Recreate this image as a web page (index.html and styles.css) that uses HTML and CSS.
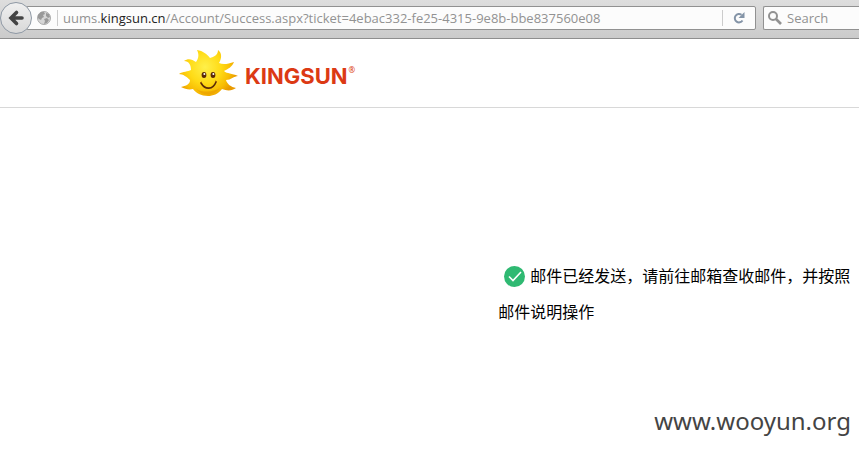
FILE: index.html
```
<!DOCTYPE html>
<html lang="zh-CN">
<head>
  <meta charset="UTF-8" />
  <meta name="viewport" content="width=device-width, initial-scale=1.0"/>
  <title>KINGSUN</title>
  <link rel="stylesheet" href="styles.css">
</head>
<body>
  <div class="toolbar">
    <button type="button" class="back" aria-label="Back">
      <svg width="18" height="18" viewBox="0 0 18 18">
        <path d="M9.5 3.5 L4 9 L9.5 14.5 M5 9 H15" fill="none" stroke="#444" stroke-width="3.6" stroke-linecap="round"/>
      </svg>
    </button>
    <div class="address">
      <svg class="globe" width="14" height="14" viewBox="0 0 14 14">
        <circle cx="7" cy="7" r="6.5" fill="#d6d6d6" stroke="#aaa"/>
        <path d="M1 4 L4 1 L7 1 L8 3 L6 4 L7 6 L5 7 L4 9 L2 8 L1 7 Z M9 2 L12 3 L13 6 L11 7 L9 5 Z M7 8 L10 7 L12 9 L10 12 L7 13 L8 10 Z" fill="#999"/>
      </svg>
      <div class="url" role="textbox" aria-label="Address" contenteditable="true" spellcheck="false">uums.<span class="domain">kingsun.cn</span>/Account/Success.aspx?ticket=4ebac332-fe25-4315-9e8b-bbe837560e08</div>
      <button type="button" class="reload" aria-label="Reload">
        <svg width="12" height="12" viewBox="0 0 12 12">
          <path d="M9.5 8.5 A4.2 4.2 0 1 1 8.5 2.8" fill="none" stroke="#8494a7" stroke-width="2"/>
          <path d="M11.5 0 V6 H5.5 Z" fill="#8494a7"/>
        </svg>
      </button>
    </div>
    <label class="search">
      <svg width="14" height="14" viewBox="0 0 14 14">
        <circle cx="5" cy="5" r="4" fill="none" stroke="#929292" stroke-width="2"/>
        <path d="M8 8 L13 13" stroke="#929292" stroke-width="2.6"/>
      </svg>
      <input type="text" placeholder="Search" aria-label="Search">
    </label>
  </div>

  <header>
    <a class="logo" href="#" aria-label="KINGSUN">
      <svg width="60" height="48" viewBox="0 0 60 48">
        <defs>
          <radialGradient id="sun" gradientUnits="userSpaceOnUse" cx="26" cy="18" r="32">
            <stop offset="0" stop-color="#fff04a"/>
            <stop offset="0.5" stop-color="#ffdb16"/>
            <stop offset="0.8" stop-color="#f8bd04"/>
            <stop offset="1" stop-color="#e99a00"/>
          </radialGradient>
        </defs>
        <path d="M17 13 C20 9 20 5 18 1 C24 2 28 5 31 9 C35 8 39 6 39 1 C43 4 43 9 40 14 C44 16 49 15 55 13 C53 18 49 20 45 22 C48 25 53 24 59 27 C55 27 52 31 47 31 C48 35 52 38 57 39 C53 42 48 42 43 40 C39 45 34 47 29 47 C22 47 17 44 14 40 C10 41 6 40 2 38 C7 37 11 35 11 31 C8 28 4 25 0 25 C4 22 9 23 12 21 C12 16 10 12 5 12 C9 9 13 10 17 13 Z" fill="url(#sun)"/>
        <path d="M17 40 C23 47 34 48 41 39 C35 43 24 44 17 40 Z" fill="#e89b00" opacity="0.6"/>
        <ellipse cx="25" cy="26" rx="2.4" ry="3" fill="#5a2b08"/>
        <ellipse cx="34" cy="26" rx="2.4" ry="3" fill="#5a2b08"/>
        <circle cx="25.4" cy="25" r="1" fill="#fff"/>
        <circle cx="34.4" cy="25" r="1" fill="#fff"/>
        <path d="M22 34 C26 41 34 41 37 33" fill="none" stroke="#5a2b08" stroke-width="1.6" stroke-linecap="round"/>
        <path d="M21 34 L23 33 M36 32 L38 33" stroke="#a05a08" stroke-width="1"/>
      </svg>
      <span class="brand">KINGSUN</span><span class="mark">®</span>
    </a>
  </header>

  <main>
    <p class="message"><svg class="tick" width="21" height="21" viewBox="0 0 21 21">
        <circle cx="10.5" cy="10.5" r="10.5" fill="#2fb972"/>
        <path d="M5 10.5 L9 14.5 L17 6" fill="none" stroke="#fff" stroke-width="1.6"/>
      </svg>邮件已经发送，请前往邮箱查收邮件，并按照邮件说明操作</p>
  </main>

  <footer>www.wooyun.org</footer>
</body>
</html>
```
FILE: styles.css
```
* {
  box-sizing: border-box;
}

body {
  font-family: "Noto Sans", "Noto Sans CJK SC", sans-serif;
  margin: 0;
  min-height: 100vh;
  display: flex;
  flex-direction: column;
  background: #fff;
}

button {
  border: none;
  padding: 0;
  background: none;
  cursor: pointer;
}

.toolbar {
  display: flex;
  align-items: center;
  height: 39px;
  padding-bottom: 3px;
  background: linear-gradient(#dedede, #cbcbcb);
  border-bottom: 1px solid #8e8e8e;
  font-family: "Open Sans", sans-serif;
  font-size: 13px;
  color: #929292;
}

.back {
  display: flex;
  align-items: center;
  justify-content: center;
  width: 32px;
  height: 32px;
  flex: none;
  z-index: 1;
  border: 1px solid #8f99a5;
  border-radius: 50%;
  background: linear-gradient(#f0f0f0, #d8d8d8);
}

.address {
  display: flex;
  align-items: center;
  flex: 1;
  min-width: 0;
  height: 24px;
  margin-left: -6px;
  padding-left: 10px;
  background: #fcfcfc;
  border: 1px solid #919191;
  border-radius: 2px;
}

.globe {
  flex: none;
}

.url {
  flex: 1;
  min-width: 0;
  overflow: hidden;
  white-space: nowrap;
  margin-left: 6px;
  padding-left: 5px;
  line-height: 16px;
  border-left: 1px solid #ccc;
}

.domain {
  color: #222;
}

.reload {
  display: flex;
  align-items: center;
  justify-content: center;
  width: 33px;
  height: 16px;
  border-left: 1px solid #ccc;
}

.search {
  display: flex;
  align-items: center;
  gap: 5px;
  width: 96px;
  height: 24px;
  margin-left: 7px;
  padding-left: 4px;
  background: #fcfcfc;
  border: 1px solid #919191;
  border-right: none;
  border-radius: 2px 0 0 2px;
}

.search svg {
  flex: none;
}

.search input {
  width: 100%;
  min-width: 0;
  padding: 0;
  border: none;
  outline: none;
  background: none;
  font: inherit;
  color: #444;
}

.search input::placeholder {
  color: #929292;
}

header {
  display: flex;
  height: 69px;
  padding: 10px 0 0 179px;
  border-bottom: 1px solid #d8d8d8;
}

.logo {
  display: flex;
  align-items: flex-start;
  color: #dc3a14;
  text-decoration: none;
}

.brand {
  margin: 13px 0 0 6px;
  font-family: Inter, sans-serif;
  font-size: 22px;
  font-weight: 700;
  line-height: 28px;
}

.mark {
  margin: 16px 0 0 1px;
  font-size: 8px;
  line-height: 10px;
}

main {
  flex: 1;
  padding: 150px 0 0 58%;
}

.message {
  margin: 0;
  font-size: 16px;
  line-height: 36px;
  color: #000;
}

.tick {
  margin: -2px 5px 0 6px;
  vertical-align: middle;
}

footer {
  padding: 0 8px 13px 0;
  font-size: 24px;
  line-height: 34px;
  text-align: right;
  color: #444;
}
```
